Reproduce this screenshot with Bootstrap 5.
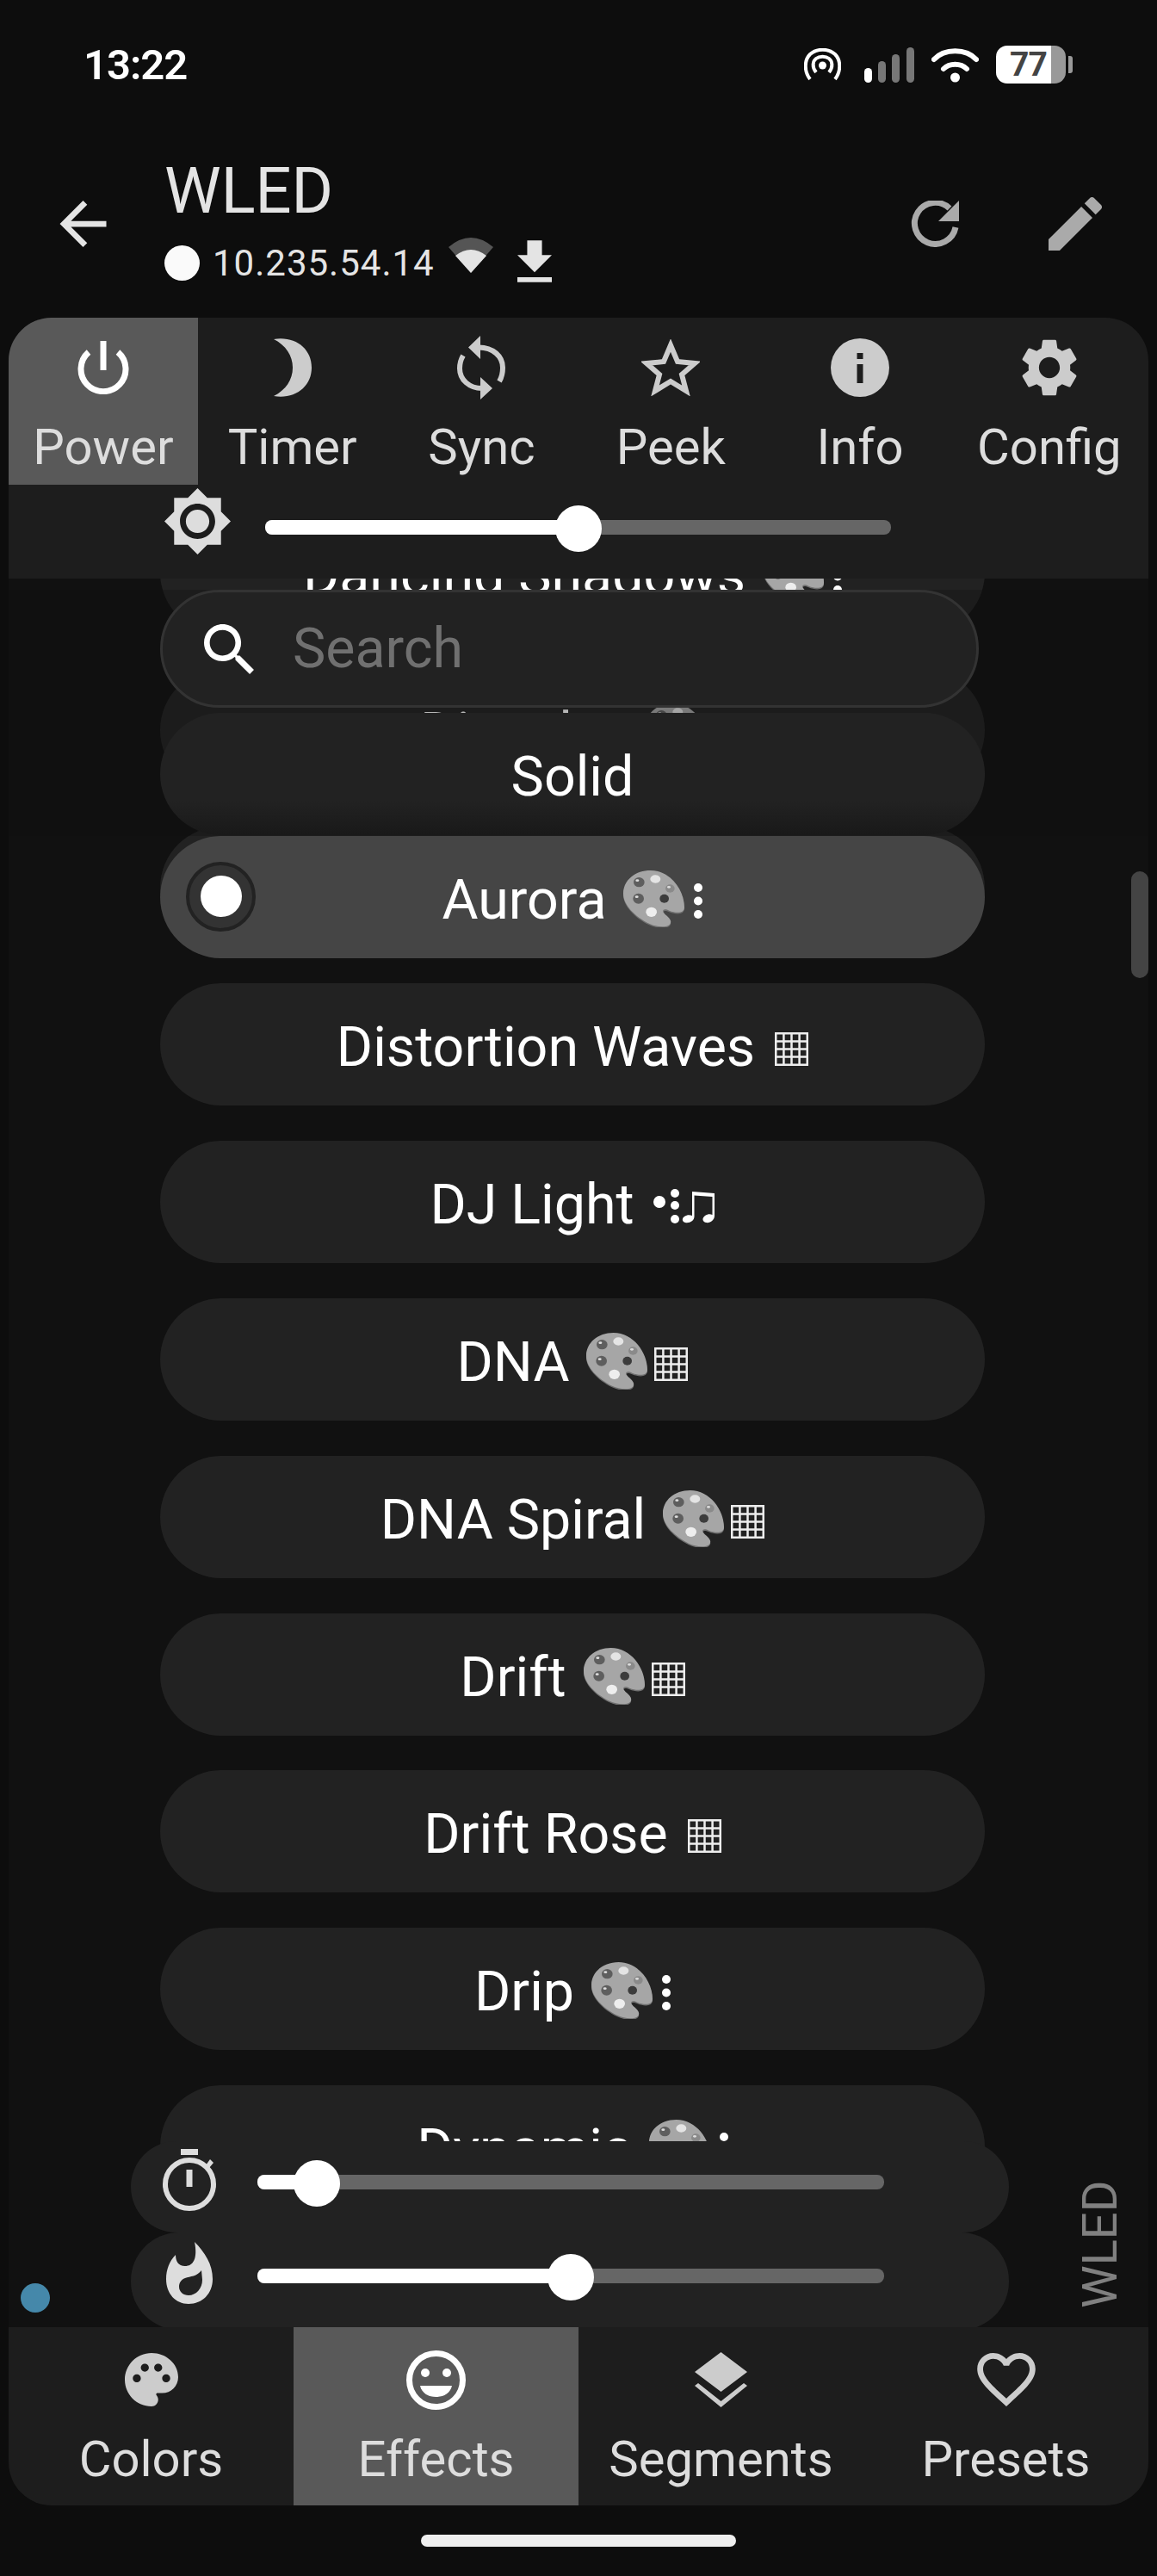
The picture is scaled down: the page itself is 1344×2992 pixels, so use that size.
<!DOCTYPE html>
<html lang="en">
<head>
    <meta charset="UTF-8">
    <title>WLED</title>
    <link href="https://cdn.jsdelivr.net/npm/bootstrap@5.3.0/dist/css/bootstrap.min.css" rel="stylesheet">
    <style>
        body { background: #0d0d0d; color: #fff; font-family: Roboto, "Liberation Sans", sans-serif; width: 1344px; height: 2992px; overflow: hidden; }
        .status-bar { height: 150px; padding: 0 98px 0 97px; }
        .status-time { font-size: 49px; font-weight: 600; line-height: 1; letter-spacing: -1px; }
        .battery { width: 81px; height: 44px; border-radius: 13px; background: linear-gradient(90deg, #fff 64px, #999 64px); color: #444; font-size: 39px; font-weight: 700; line-height: 44px; padding-left: 16px; letter-spacing: -1px; }
        .battery-nub { width: 5px; height: 20px; background: #999; border-radius: 0 3px 3px 0; margin-left: 3px; }
        .app-bar { height: 219px; padding-left: 69px; padding-right: 64px; }
        .app-title { font-size: 74px; line-height: 72px; color: #e4e4e4; margin-top: 36px; }
        .app-sub { height: 50px; margin-top: 22px; color: #e4e4e4; font-size: 42px; letter-spacing: 1px; }
        .ip-dot { width: 41px; height: 41px; background: #fafafa; border-radius: 50%; margin-right: 15px; }
        .tab-panel { margin: 0 10px; background: #1d1d1d; }
        .tab-panel-top { height: 303px; border-radius: 50px 50px 0 0; overflow: hidden; }
        .tab-panel-bottom { height: 207px; border-radius: 0 0 50px 50px; overflow: hidden; }
        .tab-item { flex: 1 1 0; color: #ddd; text-align: center; }
        .tab-panel-top .tab-item { flex: 0 0 219.8px; height: 194px; padding-top: 22px; }
        .tab-panel-bottom .tab-item { height: 207px; padding-top: 25px; }
        .tab-item.is-on { background: #595959; }
        .tab-icon { height: 72px; }
        .tab-label { font-size: 58px; line-height: 60px; margin-top: 26px; white-space: nowrap; }
        .bri-row { padding-left: 181px; }
        .slide-box { height: 54px; }
        .slide-track { height: 17px; border-radius: 8px; background: #666; position: relative; }
        .slide-fill { height: 100%; border-radius: 8px; background: #fff; }
        .slide-thumb { position: absolute; width: 54px; height: 54px; border-radius: 50%; background: #fff; top: -17px; margin-left: -27px; }
        .fx-main { height: 2031px; margin: 0 10px; background: #111; overflow: hidden; position: relative; }
        .fx-list { margin-top: -78px; padding-left: 176px; gap: 40.8px; }
        .fx-row { width: 958px; height: 142px; flex: none; background: #222; border-radius: 71px; font-size: 64.5px; line-height: 149px; text-align: center; white-space: nowrap; }
        .fx-row svg { vertical-align: baseline; }
        .ic-pal { width: 72px; height: 66px; margin-bottom: -10px; margin-left: 4px; }
        .ic-dots { width: 10px; height: 41px; margin-left: 10px; }
        .ic-grid { width: 39px; height: 39px; margin-left: 7px; }
        .ic-beat { width: 72px; height: 40px; margin-left: 6px; }
        .fx-over { position: absolute; left: 176px; }
        .fx-search { top: 13px; width: 951px; height: 137px; border: 3px solid #333; border-radius: 69px; background: #222; padding-left: 47px; font-size: 64.5px; color: #707070; }
        .fx-search span { margin-left: 44px; }
        .fx-solid { top: 156px; background: linear-gradient(#222 72%, #191919); }
        .fx-aurora { top: 299px; background: #454545; }
        .fx-radio { position: absolute; left: 30px; top: 30px; width: 81px; height: 81px; border-radius: 50%; background: #333; border: 4px solid #222; }
        .fx-radio i { position: absolute; left: 13px; top: 12px; width: 48px; height: 48px; border-radius: 50%; background: #fff; }
        .fx-dim { position: absolute; left: 0; right: 0; top: 13px; height: 286px; background: rgba(17, 17, 17, .3); }
        .slider-stack { position: absolute; top: 1815px; left: 142px; width: 1020px; }
        .slider-pill { height: 106px; border-radius: 53px; background: #222; padding-left: 37px; }
        .slider-pill + .slider-pill { height: 113px; border-radius: 56px; }
        .slider-ic { width: 62px; }
        .slider-pill .slide-box { width: 728px; margin-left: 48px; }
        .slider-a { margin-top: 39px; }
        .slider-b { margin-top: 42px; }
        .slider-pill .slide-ic-a { margin-top: 9px; }
        .slider-pill .slide-ic-b { margin-top: 11px; }
        .live-dot { position: absolute; left: 14px; top: 1980px; width: 34px; height: 34px; border-radius: 50%; background: #4588aa; }
        .side-name { position: absolute; left: 1245px; top: 1859px; height: 150px; writing-mode: vertical-rl; transform: rotate(180deg); color: #808080; font-size: 56px; line-height: 46px; }
        .scroll-thumb { position: absolute; left: 1304px; top: 340px; width: 20px; height: 124px; border-radius: 10px; background: #444; }
        .home-bar { width: 366px; height: 14px; border-radius: 7px; background: #eee; margin: 34px auto 0; }
    </style>
</head>
<body>
<svg width="0" height="0" class="d-block">
    <defs>
        <symbol id="pal" viewBox="0 0 216 198">
            <path fill="#707070" d="M95 5C40 5 0 40 0 85C0 125 40 165 90 190C115 202 150 205 162 193C172 181 160 170 145 157C132 145 140 135 160 145C185 155 213 155 213 133C213 75 165 5 95 5Z"/>
            <path fill="#a6a6a6" d="M95 0C40 0 0 35 0 80C0 120 40 160 90 185C115 197 150 200 162 188C172 176 160 165 145 152C132 140 140 130 160 140C185 150 213 150 213 128C213 70 165 0 95 0Z"/>
            <ellipse cx="55" cy="41" rx="19" ry="17" fill="#5e5e5e"/><ellipse cx="49" cy="35" rx="6" ry="4" fill="#ddd"/>
            <ellipse cx="112" cy="30" rx="18" ry="14" fill="#e4e4e4"/>
            <ellipse cx="163" cy="63" rx="16" ry="14" fill="#8a8a8a"/><ellipse cx="159" cy="58" rx="6" ry="4" fill="#ddd"/>
            <ellipse cx="53" cy="98" rx="19" ry="18" fill="#5e5e5e"/><ellipse cx="47" cy="92" rx="6" ry="4" fill="#ddd"/>
            <ellipse cx="143" cy="98" rx="16" ry="15" fill="#3c3c3c"/>
            <ellipse cx="98" cy="145" rx="19" ry="17" fill="#eee"/>
        </symbol>
        <symbol id="dots" viewBox="0 0 10 41">
            <circle cx="5" cy="5" r="5" fill="#fff"/><circle cx="5" cy="20.5" r="5" fill="#fff"/><circle cx="5" cy="36" r="5" fill="#fff"/>
        </symbol>
        <symbol id="grid" viewBox="0 0 39 39">
            <path fill="none" stroke="#eee" stroke-width="2.5" d="M1.25 1.25H37.75V37.75H1.25ZM10.4 1V38M19.5 1V38M28.6 1V38M1 10.4H38M1 19.5H38M1 28.6H38"/>
        </symbol>
        <symbol id="beat" viewBox="0 0 72 40">
            <circle cx="7" cy="15" r="7" fill="#fff"/>
            <circle cx="25" cy="5" r="5" fill="#fff"/><circle cx="25" cy="19" r="5" fill="#fff"/><circle cx="25" cy="35" r="5" fill="#fff"/>
            <path fill="#fff" d="M45 3L71 5V31C71 36 66 40 61 39C57 38 56 34 60 31C63 29 66 29 68.5 30V9L47.5 7.5V32C47.5 37 42 40 37 39C33 38 33 34 36 32C39 30 42 30 45 31Z"/>
        </symbol>
    </defs>
</svg>

<div class="status-bar d-flex align-items-center justify-content-between">
    <div class="status-time">13:22</div>
    <div class="d-flex align-items-center">
        <svg width="43" height="38" viewBox="0 0 43 38" fill="none" stroke="#fff"><path stroke-width="4" d="M7 36C0 27 0 14 7 7C15 0 28 0 36 7C43 14 43 27 36 36"/><path stroke-width="4" d="M14 28C9 22 10 15 14 12C18 9 25 9 29 12C33 15 34 22 29 28"/><circle cx="21.500" cy="20" r="4.500" fill="#fff" stroke="none"/></svg>
        <svg class="ms-4" width="58" height="41" viewBox="0 0 58 41" style="margin-left:27px!important"><rect x="0" y="24" width="9" height="17" rx="4.500" fill="#fff"/><rect x="16" y="16" width="9" height="25" rx="4.500" fill="#777"/><rect x="32" y="8" width="9" height="33" rx="4.500" fill="#777"/><rect x="49" y="0" width="9" height="41" rx="4.500" fill="#777"/></svg>
        <svg class="ms-4" width="55" height="41" viewBox="0 0 55 41" fill="none" stroke="#fff" stroke-width="6" stroke-linecap="round" style="margin-left:20px!important"><path d="M3 14C15 1 40 1 52 14"/><path d="M14 25C21 18 34 18 41 25"/><circle cx="27.500" cy="35" r="5.500" fill="#fff" stroke="none"/></svg>
        <div class="battery ms-3" style="margin-left:20px!important">77</div>
        <div class="battery-nub"></div>
    </div>
</div>

<div class="app-bar d-flex align-items-start">
    <svg class="mt-0" width="55" height="54" viewBox="4 4 16 16" fill="#e4e4e4" style="margin-top:83px!important"><path d="M20 11H7.830l5.590-5.590L12 4l-8 8 8 8 1.410-1.410L7.830 13H20v-2z"/></svg>
    <div class="flex-grow-1" style="margin-left:67px">
        <div class="app-title">WLED</div>
        <div class="app-sub d-flex align-items-center">
            <div class="ip-dot"></div>
            <span>10.235.54.14</span>
            <svg class="ms-3" width="52" height="41" viewBox="0 0 52 41" style="margin-top:-18px"><path fill="#555" d="M0 11Q26 -11 52 11L26 41Z"/><path fill="#e4e4e4" d="M8 21Q26 7 44 21L26 41Z"/></svg>
            <svg width="40" height="49" viewBox="5 3 14 17" fill="#e4e4e4" style="margin-left:28px;margin-top:-4px"><path d="M19 9h-4V3H9v6H5l7 7 7-7zM5 18v2h14v-2H5z"/></svg>
        </div>
    </div>
    <svg width="56" height="54" viewBox="0 0 56 54" style="margin-top:83px"><path fill="none" stroke="#aaa" stroke-width="7" d="M45 9A24 24 0 1 0 52 31"/><path fill="#aaa" d="M56 0V24H32Z"/></svg>
    <svg width="62" height="62" viewBox="3 3 18 18" fill="#aaa" style="margin-top:79px;margin-left:104px"><path d="M3 17.250V21h3.750L17.810 9.940l-3.750-3.750L3 17.250zM20.710 7.040c.39-.39.39-1.020 0-1.410l-2.340-2.340c-.39-.39-1.020-.39-1.410 0l-1.830 1.830 3.750 3.750 1.830-1.830z"/></svg>
</div>

<div class="tab-panel tab-panel-top">
    <div class="d-flex">
        <div class="tab-item is-on">
            <div class="tab-icon d-flex align-items-center justify-content-center">
                <svg width="62" height="62" viewBox="0 0 62 62" fill="none" stroke="#fff" stroke-width="7"><path d="M31 0V34"/><path d="M14 13A26 26 0 1 0 48 13"/></svg>
            </div>
            <div class="tab-label">Power</div>
        </div>
        <div class="tab-item">
            <div class="tab-icon d-flex align-items-center justify-content-center">
                <svg width="44" height="68" viewBox="0 0 44 68" fill="#ccc"><path d="M0 1C25 -3 44 12 44 34C44 56 25 71 0 67C14 60 22 48 22 34C22 20 14 8 0 1Z"/></svg>
            </div>
            <div class="tab-label">Timer</div>
        </div>
        <div class="tab-item">
            <div class="tab-icon d-flex align-items-center justify-content-center">
                <svg width="56" height="75" viewBox="0 0 56 75"><path fill="none" stroke="#ccc" stroke-width="6" d="M25 13.500C42 13.500 53 24 53 37C53 42 52 48 49 53M29 61C14 61 3 51 3 38C3 32 4 28 7 23"/><path fill="#ccc" d="M27 0L13 13.500L27 27ZM27 48L41 61L27 74Z"/></svg>
            </div>
            <div class="tab-label">Sync</div>
        </div>
        <div class="tab-item">
            <div class="tab-icon d-flex align-items-center justify-content-center">
                <svg width="68" height="66" viewBox="0 0 68 66"><path fill="none" stroke="#ccc" stroke-width="6" stroke-linejoin="miter" d="M34 7L42 26L62 28L47 41L52 60L34 49L16 60L21 41L6 28L26 26Z"/></svg>
            </div>
            <div class="tab-label">Peek</div>
        </div>
        <div class="tab-item">
            <div class="tab-icon d-flex align-items-center justify-content-center">
                <svg width="68" height="68" viewBox="0 0 68 68"><circle cx="34" cy="34" r="34" fill="#ccc"/><path fill="#1d1d1d" d="M30.500 17H37.500V24H30.500ZM30.500 30H37.500V52H30.500Z"/></svg>
            </div>
            <div class="tab-label">Info</div>
        </div>
        <div class="tab-item">
            <div class="tab-icon d-flex align-items-center justify-content-center">
                <svg width="64" height="68" viewBox="2.500 2 19 20" fill="#ccc"><path d="M19.140 12.940c.04-.3.06-.61.06-.94 0-.32-.02-.64-.07-.94l2.030-1.580a.49.49 0 0 0 .12-.61l-1.920-3.320a.488.488 0 0 0-.59-.22l-2.390.96c-.5-.38-1.030-.7-1.620-.94l-.36-2.540a.484.484 0 0 0-.48-.41h-3.840c-.24 0-.43.17-.47.41l-.36 2.540c-.59.24-1.130.57-1.620.94l-2.390-.96c-.22-.08-.47 0-.59.22L2.740 8.870c-.12.21-.08.47.12.61l2.030 1.580c-.05.3-.09.63-.09.94s.02.64.07.94l-2.030 1.580a.49.49 0 0 0-.12.61l1.920 3.320c.12.22.37.29.59.22l2.390-.96c.5.38 1.030.7 1.620.94l.36 2.540c.05.24.24.41.48.41h3.840c.24 0 .44-.17.47-.41l.36-2.540c.59-.24 1.130-.56 1.620-.94l2.390.96c.22.08.47 0 .59-.22l1.920-3.320c.12-.22.07-.47-.12-.61l-2.010-1.580zM12 15.600c-1.980 0-3.600-1.620-3.600-3.600s1.620-3.600 3.600-3.600 3.600 1.620 3.600 3.600-1.620 3.600-3.600 3.600z"/></svg>
            </div>
            <div class="tab-label">Config</div>
        </div>
    </div>
    <div class="bri-row d-flex align-items-start">
        <svg class="flex-none" width="77" height="77" viewBox="0.690 0.690 22.620 22.620" fill="#ddd" style="margin-top:4px"><path fill-rule="evenodd" d="M20 8.690V4h-4.690L12 .69 8.690 4H4v4.690L.69 12 4 15.310V20h4.690L12 23.310 15.310 20H20v-4.690L23.310 12 20 8.690zM12 18c-3.310 0-6-2.690-6-6s2.690-6 6-6 6 2.690 6 6-2.690 6-6 6zm0-10c-2.210 0-4 1.790-4 4s1.790 4 4 4 4-1.790 4-4-1.790-4-4-4z"/></svg>
        <div class="slide-box" style="width:727px;margin-left:40px;margin-top:41px">
            <div class="slide-track"><div class="slide-fill" style="width:50%"></div><div class="slide-thumb" style="left:50%"></div></div>
        </div>
    </div>
</div>

<div class="fx-main">
    <div class="fx-list d-flex flex-column">
        <div class="fx-row">Dancing Shadows <svg class="ic-pal"><use href="#pal"/></svg><svg class="ic-dots"><use href="#dots"/></svg></div>
        <div class="fx-row">Dissolve <svg class="ic-pal"><use href="#pal"/></svg><svg class="ic-dots"><use href="#dots"/></svg></div>
        <div class="fx-row">Dissolve Rnd <svg class="ic-pal"><use href="#pal"/></svg><svg class="ic-dots"><use href="#dots"/></svg></div>
        <div class="fx-row">Distortion Waves <svg class="ic-grid"><use href="#grid"/></svg></div>
        <div class="fx-row">DJ Light <svg class="ic-beat"><use href="#beat"/></svg></div>
        <div class="fx-row">DNA <svg class="ic-pal"><use href="#pal"/></svg><svg class="ic-grid"><use href="#grid"/></svg></div>
        <div class="fx-row">DNA Spiral <svg class="ic-pal"><use href="#pal"/></svg><svg class="ic-grid"><use href="#grid"/></svg></div>
        <div class="fx-row">Drift <svg class="ic-pal"><use href="#pal"/></svg><svg class="ic-grid"><use href="#grid"/></svg></div>
        <div class="fx-row">Drift Rose <svg class="ic-grid"><use href="#grid"/></svg></div>
        <div class="fx-row">Drip <svg class="ic-pal"><use href="#pal"/></svg><svg class="ic-dots"><use href="#dots"/></svg></div>
        <div class="fx-row">Dynamic <svg class="ic-pal"><use href="#pal"/></svg><svg class="ic-dots"><use href="#dots"/></svg></div>
    </div>

    <div class="fx-dim"></div>
    <div class="fx-over fx-search d-flex align-items-center">
        <svg width="60" height="58" viewBox="3 3 17.500 17.500" fill="#fff"><path d="M15.500 14h-.79l-.28-.27C15.410 12.590 16 11.110 16 9.500 16 5.910 13.090 3 9.500 3S3 5.910 3 9.500 5.910 16 9.500 16c1.610 0 3.090-.59 4.230-1.570l.27.28v.79l5 4.990L20.490 19l-4.990-5zm-6 0C7.010 14 5 11.990 5 9.500S7.010 5 9.500 5 14 7.010 14 9.500 11.990 14 9.500 14z"/></svg>
        <span>Search</span>
    </div>
    <div class="fx-over fx-row fx-solid">Solid</div>
    <div class="fx-over fx-row fx-aurora">
        <div class="fx-radio"><i></i></div>
        Aurora <svg class="ic-pal"><use href="#pal"/></svg><svg class="ic-dots"><use href="#dots"/></svg>
    </div>

    <div class="slider-stack">
        <div class="slider-pill d-flex align-items-start">
            <svg class="slider-ic slide-ic-a" width="62" height="72" viewBox="0 0 62 72"><path fill="#ddd" d="M21 0H41V7H21Z"/><circle cx="31" cy="41" r="28" fill="none" stroke="#ddd" stroke-width="6"/><path fill="#ddd" d="M27.500 24H34.500V44H27.500ZM50 19L55 12L59 16L54 22Z"/></svg>
            <div class="slide-box slider-a"><div class="slide-track"><div class="slide-fill" style="width:9.500%"></div><div class="slide-thumb" style="left:9.500%"></div></div></div>
        </div>
        <div class="slider-pill d-flex align-items-start">
            <svg class="slider-ic slide-ic-b" width="62" height="72" viewBox="-4 0 62 72"><path fill="#ddd" fill-rule="evenodd" d="M33 0C45 12 54 26 54 43C54 60 42 72 26 72C11 72 0 60 0 43C0 32 4 22 11 15C11 22 14 28 22 28C31 28 37 20 33 0ZM41 33C36 40 28 40 22 42C17 44 15 48 15 52C15 58 20 62 26 62C35 62 42 54 42 44Z"/></svg>
            <div class="slide-box slider-b"><div class="slide-track"><div class="slide-fill" style="width:50%"></div><div class="slide-thumb" style="left:50%"></div></div></div>
        </div>
    </div>

    <div class="live-dot"></div>
    <div class="side-name">WLED</div>
    <div class="scroll-thumb"></div>
</div>

<div class="tab-panel tab-panel-bottom d-flex">
    <div class="tab-item">
        <div class="tab-icon d-flex align-items-center justify-content-center">
            <svg width="62" height="62" viewBox="2 2 20 20" fill="#ccc"><path d="M12 2C6.490 2 2 6.490 2 12s4.490 10 10 10c1.380 0 2.500-1.120 2.500-2.500 0-.61-.23-1.200-.64-1.670-.08-.1-.13-.21-.13-.33 0-.28.22-.5.5-.5H16c3.310 0 6-2.690 6-6 0-4.960-4.490-9-10-9zM6.500 13c-.83 0-1.500-.67-1.500-1.500S5.670 10 6.500 10s1.500.67 1.500 1.500S7.330 13 6.500 13zm3-4C8.670 9 8 8.330 8 7.500S8.670 6 9.500 6s1.500.67 1.500 1.500S10.330 9 9.500 9zm5 0c-.83 0-1.500-.67-1.500-1.500S13.670 6 14.500 6s1.500.67 1.500 1.500S15.330 9 14.500 9zm3 4c-.83 0-1.500-.67-1.500-1.500s.67-1.500 1.500-1.500 1.500.67 1.500 1.500-.67 1.500-1.500 1.500z"/></svg>
        </div>
        <div class="tab-label">Colors</div>
    </div>
    <div class="tab-item is-on">
        <div class="tab-icon d-flex align-items-center justify-content-center">
            <svg width="69" height="69" viewBox="0 0 69 69"><circle cx="34.500" cy="34.500" r="31" fill="none" stroke="#fff" stroke-width="7"/><circle cx="22" cy="26" r="5" fill="#fff"/><circle cx="47" cy="26" r="5" fill="#fff"/><path fill="#fff" d="M16 41H53C51 50 43 54 34.500 54C26 54 18 50 16 41Z"/></svg>
        </div>
        <div class="tab-label">Effects</div>
    </div>
    <div class="tab-item">
        <div class="tab-icon d-flex align-items-center justify-content-center">
            <svg width="61" height="64" viewBox="0 0 61 64" fill="#ccc"><path d="M30.500 0L61 23L30.500 46L0 23ZM0 39L4 36L30.500 57L57 36L61 39L30.500 64Z"/></svg>
        </div>
        <div class="tab-label">Segments</div>
    </div>
    <div class="tab-item">
        <div class="tab-icon d-flex align-items-center justify-content-center">
            <svg width="68" height="62" viewBox="2 3 20 18.350" fill="#ccc"><path d="M16.500 3c-1.740 0-3.410.81-4.500 2.090C10.910 3.810 9.240 3 7.500 3 4.420 3 2 5.420 2 8.500c0 3.780 3.400 6.860 8.550 11.540L12 21.350l1.450-1.320C18.600 15.360 22 12.280 22 8.500 22 5.420 19.580 3 16.500 3zm-4.400 15.550l-.1.1-.1-.1C7.140 14.240 4 11.390 4 8.500 4 6.500 5.500 5 7.500 5c1.540 0 3.040.99 3.570 2.360h1.870C13.460 5.990 14.960 5 16.500 5c2 0 3.500 1.500 3.500 3.500 0 2.890-3.140 5.740-7.900 10.050z"/></svg>
        </div>
        <div class="tab-label">Presets</div>
    </div>
</div>
<div class="home-bar"></div>
</body>
</html>
